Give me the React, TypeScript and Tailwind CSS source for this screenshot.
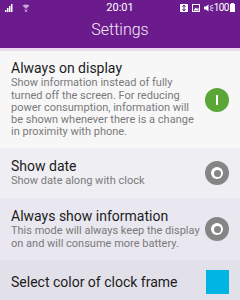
import React from "react";

const font = { fontFamily: "Roboto, 'Noto Sans', sans-serif" };

function StatusBar() {
  return (
    <div className="relative flex h-[15px] items-center px-[5px] text-white">
      <svg width="8" height="8" viewBox="0 0 8 8" className="mt-[1px]">
        <rect x="0" y="6" width="1.5" height="2" fill="#fff" />
        <rect x="2" y="4" width="1.5" height="4" fill="#fff" />
        <rect x="4" y="2" width="1.5" height="6" fill="#fff" />
        <rect x="6" y="0" width="1.5" height="8" fill="#fff" />
      </svg>
      <svg width="8" height="8" viewBox="0 0 8 8" className="ml-[9px] mt-[1px]">
        <path d="M0.5 1.5 Q4 -0.5 7.5 1.5 L4 5 Z" fill="#c7a6d6" />
        <path d="M2.5 5.5 L5.5 8 M5.5 5.5 L2.5 8" stroke="#c7a6d6" strokeWidth="1" />
      </svg>
      <div className="absolute left-0 right-0 top-0 flex h-[15px] items-center justify-center text-[11px] leading-none" style={font}>
        20:01
      </div>
      <div className="ml-auto flex items-center gap-[4px]">
        <svg width="8" height="8" viewBox="0 0 8 8">
          <rect x="0" y="0" width="8" height="8" fill="#fff" />
          <path d="M4 1 L4 7 M2.3 2.8 L4 1 L5.7 2.8 M2.3 5.2 L4 7 L5.7 5.2" stroke="#6c1b8c" strokeWidth="1" fill="none" />
        </svg>
        <svg width="8" height="8" viewBox="0 0 8 8">
          <rect x="0.5" y="0.5" width="7" height="7" fill="none" stroke="#fff" strokeWidth="1" />
          <path d="M1.5 6.5 L3.5 3.5 L5 5 L6.5 3.5 L6.5 6.5 Z" fill="#fff" />
        </svg>
        <div className="flex items-center">
          <svg width="10" height="8" viewBox="0 0 10 8">
            <path d="M0 2.5 L2 2.5 L4.5 0.5 L4.5 7.5 L2 5.5 L0 5.5 Z" fill="#fff" />
            <path d="M6 2.5 L9 1 M6 4 L9.5 4 M6 5.5 L9 7" stroke="#fff" strokeWidth="0.9" />
          </svg>
          <span className="text-[10px] leading-none tracking-[-0.5px]" style={font}>100</span>
          <div className="ml-[1px] flex h-[9px] w-[5px] flex-col items-center">
            <div className="h-[1px] w-[3px] bg-white" />
            <div className="h-[8px] w-[5px] bg-white" />
          </div>
        </div>
      </div>
    </div>
  );
}

function GreenToggle() {
  return (
    <div className="flex h-[24px] w-[24px] shrink-0 items-center justify-center rounded-full bg-[#5aa637]">
      <div className="h-[10px] w-[2px] bg-white" />
    </div>
  );
}

function GrayToggle() {
  return (
    <div className="flex h-[24px] w-[24px] shrink-0 items-center justify-center rounded-full bg-[#858585]">
      <div className="flex h-[12px] w-[12px] items-center justify-center rounded-full bg-white">
        <div className="h-[7px] w-[7px] rounded-full bg-[#858585]" />
      </div>
    </div>
  );
}

function Row({
  title,
  desc,
  bg,
  h,
  right,
}: {
  title: string;
  desc?: React.ReactNode;
  bg: string;
  h: string;
  right: React.ReactNode;
}) {
  return (
    <div className={`flex items-center pl-[11px] pr-[11px] ${bg} ${h}`}>
      <div className="flex-1">
        <div className="text-[14px] leading-[17px] text-[#1c1c1c]" style={font}>
          {title}
        </div>
        {desc && (
          <div className="text-[11px] leading-[12.25px] text-[#7a7a7a]" style={font}>
            {desc}
          </div>
        )}
      </div>
      {right}
    </div>
  );
}

export default function App() {
  return (
    <div className="h-[300px] w-[240px] overflow-hidden bg-[#f7f7f8]">
      <div className="h-[48px] bg-[#6c1b8c]">
        <StatusBar />
        <div className="flex h-[33px] items-center justify-center pb-[3px] text-[16px] font-light text-[#f3eaf7]" style={font}>
          Settings
        </div>
      </div>
      <div className="h-[3px] bg-[#ead9f0]" />
      <Row
        bg="bg-[#f7f7f8]"
        h="h-[97px]"
        title="Always on display"
        desc={
          <>
            Show information instead of fully
            <br />
            turned off the screen. For reducing
            <br />
            power consumption, information will
            <br />
            be shown whenever there is a change
            <br />
            in proximity with phone.
          </>
        }
        right={<GreenToggle />}
      />
      <Row
        bg="bg-[#efeef3]"
        h="h-[50px]"
        title="Show date"
        desc="Show date along with clock"
        right={<GrayToggle />}
      />
      <Row
        bg="bg-[#e9e7ef]"
        h="h-[62px]"
        title="Always show information"
        desc={
          <>
            This mode will always keep the display
            <br />
            on and will consume more battery.
          </>
        }
        right={<GrayToggle />}
      />
      <Row
        bg="bg-[#e2e0e9]"
        h="h-[44px]"
        title="Select color of clock frame"
        right={<div className="h-[24px] w-[23px] shrink-0 bg-[#00b4e4]" />}
      />
    </div>
  );
}
